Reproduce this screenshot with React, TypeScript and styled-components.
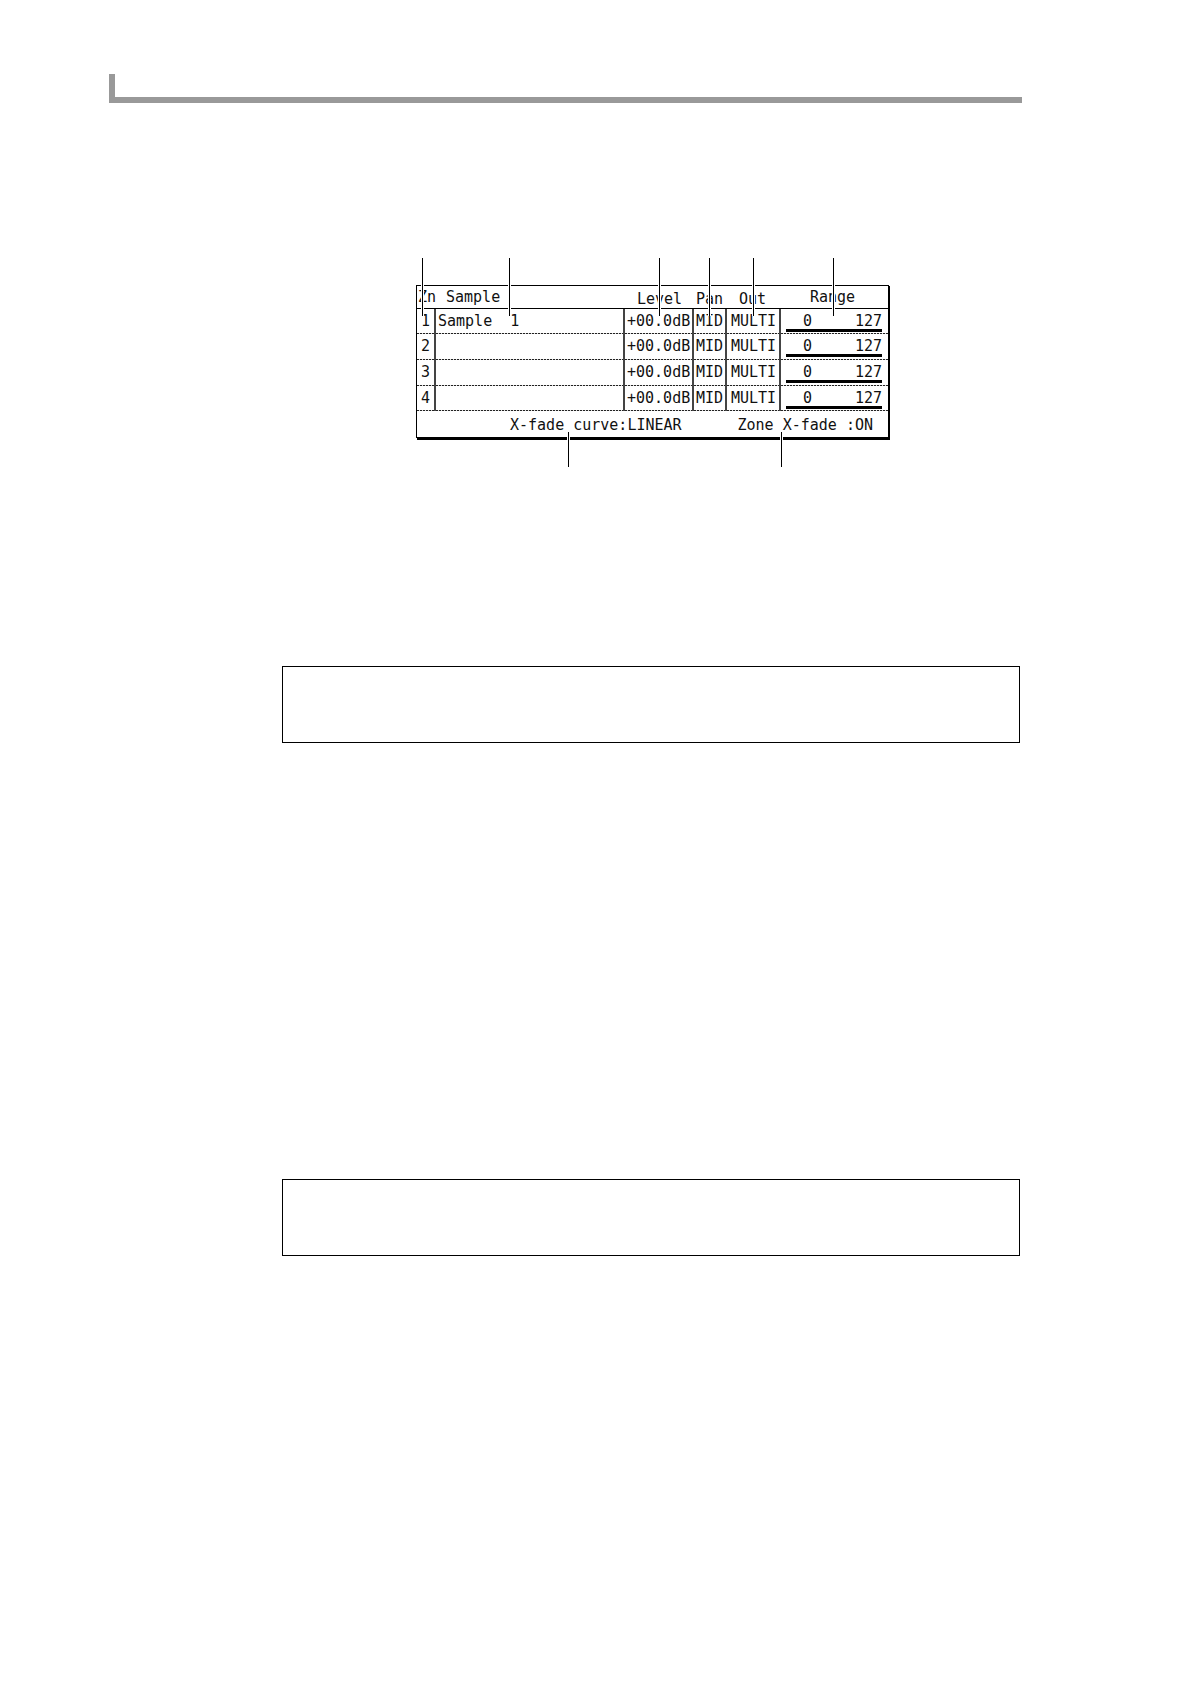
import React from "react";
import styled, { createGlobalStyle } from "styled-components";

const GlobalStyle = createGlobalStyle`
  *, *::before, *::after { box-sizing: border-box; }
  body { margin: 0; background: #fff; color: #000; }
`;

const Page = styled.main`
  min-height: 100vh;
  padding: 74px 170px 74px 109px;
`;

const HeaderRule = styled.header`
  height: 29px;
  margin-right: -2px;
  border-left: 6px solid #999;
  border-bottom: 6px solid #999;
`;

const Figure = styled.figure`
  position: relative;
  width: 473px;
  margin: 155px 0 199px 307px;
  padding: 27px 0 29px;
`;

const Lcd = styled.div`
  border: 1px solid #000;
  box-shadow: 1px 1px #000, 1px 2px #000;
  font-family: "DejaVu Sans Mono", "Liberation Mono", monospace;
  font-size: 15px;
  line-height: 18px;
  white-space: pre;
  color: #111;
`;

const ZoneTable = styled.table`
  width: 100%;
  table-layout: fixed;
  border-collapse: separate;
  border-spacing: 0;
`;

const Col = styled.col<{ $w?: number }>`
  width: ${(p) => (p.$w ? `${p.$w}px` : "auto")};
`;

const Head = styled.th<{ $indent: number; $low?: boolean }>`
  height: 23px;
  padding: ${(p) => (p.$low ? "4px" : "2px")} 0 0 ${(p) => p.$indent}px;
  border-bottom: 1px solid #000;
  font-weight: 400;
  text-align: left;
  vertical-align: top;
  line-height: 18px;
`;

const Row = styled.tr<{ $tall: boolean }>`
  height: ${(p) => (p.$tall ? 26 : 25)}px;
`;

const Cell = styled.td<{ $indent: number; $last?: boolean }>`
  padding: 3px 0 0 ${(p) => p.$indent}px;
  border-right: ${(p) => (p.$last ? "0" : "2px solid #444")};
  vertical-align: top;
  background: repeating-linear-gradient(90deg, #222 0 2px, #ddd 2px 3px) left
    bottom / 100% 1px no-repeat;
`;

const Range = styled.div`
  display: flex;
  justify-content: space-between;
  width: 96px;
  height: 20px;
  padding-left: 17px;
  border-bottom: 3px solid #000;
`;

const Settings = styled.div`
  display: flex;
  justify-content: space-between;
  padding: 5px 15px 3px 93px;
`;

const Callout = styled.span<{ $x: number; $below?: boolean }>`
  position: absolute;
  left: ${(p) => p.$x}px;
  ${(p) => (p.$below ? "bottom: 0; height: 35px;" : "top: 0; height: 58px;")}
  width: 1px;
  background: #000;
  box-shadow: -1px 0 #fff, 1px 0 #fff;
`;

const NoteBox = styled.aside`
  height: 77px;
  margin: 0 0 436px 173px;
  border: 1px solid #000;

  &:last-child { margin-bottom: 0; }
`;

const zones = [
  { id: 1, sample: "Sample  1" },
  { id: 2, sample: "" },
  { id: 3, sample: "" },
  { id: 4, sample: "" },
];

const upperCallouts = [6, 93, 243, 293, 337, 417];
const lowerCallouts = [152, 365];

export default function App() {
  return (
    <>
      <GlobalStyle />
      <Page>
        <HeaderRule />
        <Figure>
          <Lcd>
            <ZoneTable>
              <colgroup>
                <Col $w={19} />
                <Col />
                <Col $w={69} />
                <Col $w={33} />
                <Col $w={54} />
                <Col $w={107} />
              </colgroup>
              <thead>
                <tr>
                  <Head scope="col" $indent={1}>Zn</Head>
                  <Head scope="col" $indent={10}>Sample</Head>
                  <Head scope="col" $indent={12} $low>Level</Head>
                  <Head scope="col" $indent={2} $low>Pan</Head>
                  <Head scope="col" $indent={12} $low>Out</Head>
                  <Head scope="col" $indent={29}>Range</Head>
                </tr>
              </thead>
              <tbody>
                {zones.map((zone) => (
                  <Row key={zone.id} $tall={zone.id === 2 || zone.id === 3}>
                    <Cell $indent={4}>{zone.id}</Cell>
                    <Cell $indent={2}>{zone.sample}</Cell>
                    <Cell $indent={2}>+00.0dB</Cell>
                    <Cell $indent={2}>MID</Cell>
                    <Cell $indent={4}>MULTI</Cell>
                    <Cell $indent={5} $last>
                      <Range>
                        <span>0</span>
                        <span>127</span>
                      </Range>
                    </Cell>
                  </Row>
                ))}
              </tbody>
            </ZoneTable>
            <Settings>
              <span>X-fade curve:LINEAR</span>
              <span>Zone X-fade :ON</span>
            </Settings>
          </Lcd>
          {upperCallouts.map((x) => (
            <Callout key={x} $x={x} />
          ))}
          {lowerCallouts.map((x) => (
            <Callout key={x} $x={x} $below />
          ))}
        </Figure>
        <NoteBox />
        <NoteBox />
      </Page>
    </>
  );
}
